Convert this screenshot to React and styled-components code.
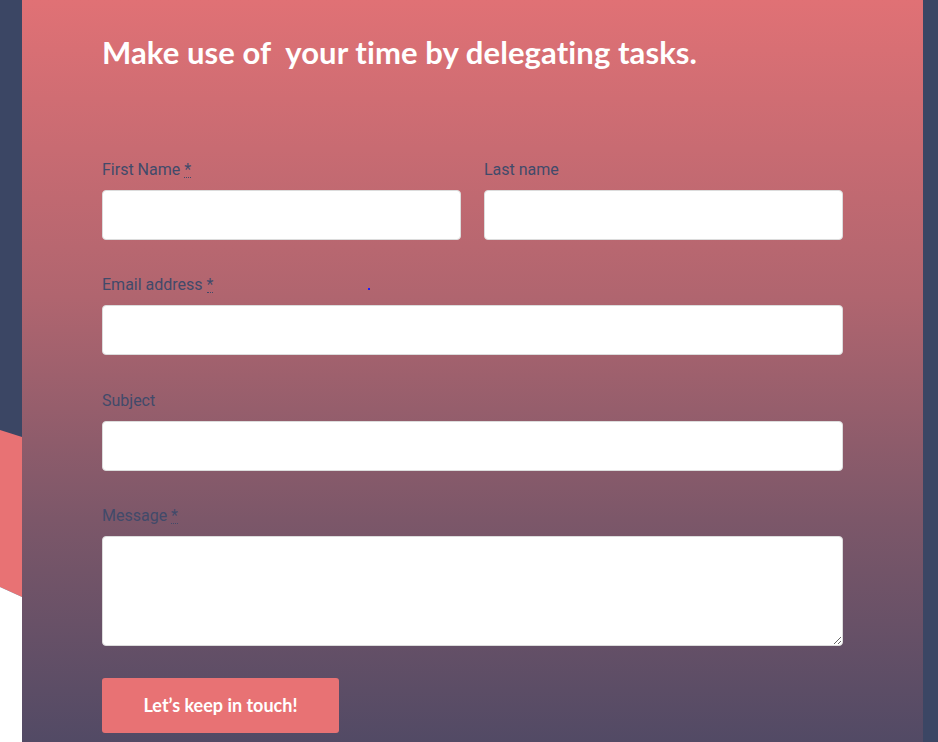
import styled, { createGlobalStyle } from "styled-components";

const GlobalStyle = createGlobalStyle`
    html, body {
        margin: 0;
        padding: 0;
        height: 100%;
        overflow: hidden;
    }
    body {
        background-color: #3b4664;
    }
`;

const Page = styled.div`
    position: relative;
    width: 938px;
    height: 742px;
    padding: 0 15px 0 22px;
    box-sizing: border-box;
    background-color: #3b4664;
    overflow: hidden;
`;

const Decoration = styled.svg`
    position: absolute;
    left: 0;
    top: 0;
    width: 22px;
    height: 742px;
`;

const Panel = styled.section`
    position: relative;
    height: 100%;
    padding: 34px 80px 0 80px;
    box-sizing: border-box;
    background: linear-gradient(180deg, #e07175 0%, #b0656f 40%, #7c5769 70%, #524a65 100%);
`;

const Heading = styled.h2`
    margin: 0 0 88px 0;
    color: #ffffff;
    font-family: "Lato", "Open Sans", sans-serif;
    font-weight: 700;
    font-size: 31px;
    line-height: 36px;
    letter-spacing: 0.1px;
    white-space: pre;
`;

const Form = styled.form`
    display: flex;
    flex-direction: column;
    gap: 33.4px;
`;

const Row = styled.div`
    display: grid;
    grid-template-columns: ${props => (props.split ? "1fr 1fr" : "1fr")};
    column-gap: 23px;
`;

const Field = styled.div`
    display: flex;
    flex-direction: column;
`;

const Label = styled.label`
    position: relative;
    height: 24px;
    margin-bottom: 8px;
    color: #414a6a;
    font-family: "Roboto", "Liberation Sans", sans-serif;
    font-size: 16px;
    line-height: 24px;

    abbr {
        text-decoration: none;
        border-bottom: 1px dotted #414a6a;
        line-height: 14px;
        display: inline-block;
    }
`;

const Stray = styled.a`
    position: absolute;
    left: 266px;
    top: 15px;
    width: 2px;
    height: 2px;
    background-color: #1a1aff;
`;

const Input = styled.input`
    height: 50px;
    box-sizing: border-box;
    border: 1px solid #dcdcdc;
    border-radius: 4px;
    background: #ffffff;
    outline: none;
`;

const TextArea = styled.textarea`
    height: 110px;
    box-sizing: border-box;
    border: 1px solid #dcdcdc;
    border-radius: 4px;
    background: #ffffff;
    outline: none;
    resize: vertical;
`;

const Button = styled.button`
    width: 237px;
    height: 55px;
    margin-top: -2px;
    border: none;
    border-radius: 3px;
    background-color: #e87274;
    color: #ffffff;
    font-family: "Lato", "Open Sans", sans-serif;
    font-weight: 700;
    font-size: 18px;
    cursor: pointer;
`;

const Required = () => (
    <>
        {" "}
        <abbr title="required">*</abbr>
    </>
);

const App = () => (
    <Page>
        <GlobalStyle />
        <Decoration viewBox="0 0 22 742" preserveAspectRatio="none">
            <polygon points="0,430 22,437 22,597 0,587" fill="#e87274" />
            <polygon points="0,587 22,597 22,742 0,742" fill="#ffffff" />
        </Decoration>
        <Panel>
            <Heading>Make use of  your time by delegating tasks.</Heading>
            <Form onSubmit={e => e.preventDefault()}>
                <Row split>
                    <Field>
                        <Label>
                            First Name<Required />
                        </Label>
                        <Input type="text" />
                    </Field>
                    <Field>
                        <Label>Last name</Label>
                        <Input type="text" />
                    </Field>
                </Row>
                <Row>
                    <Field>
                        <Label>
                            Email address<Required />
                            <Stray href="#" />
                        </Label>
                        <Input type="email" />
                    </Field>
                </Row>
                <Row>
                    <Field>
                        <Label>Subject</Label>
                        <Input type="text" />
                    </Field>
                </Row>
                <Row>
                    <Field>
                        <Label>
                            Message<Required />
                        </Label>
                        <TextArea />
                    </Field>
                </Row>
                <div>
                    <Button type="submit">Let’s keep in touch!</Button>
                </div>
            </Form>
        </Panel>
    </Page>
);

export default App;
